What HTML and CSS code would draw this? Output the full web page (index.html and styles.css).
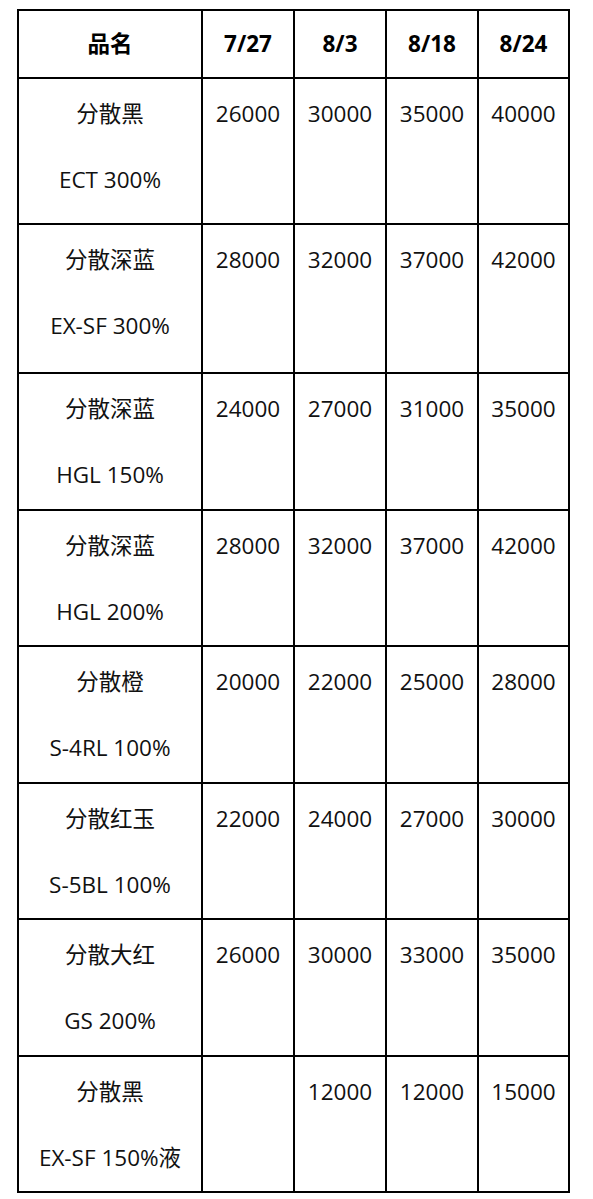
FILE: index.html
```html
<!DOCTYPE html>
<html lang="zh-CN">
<head>
<meta charset="utf-8">
<title>分散染料价格</title>
<link rel="stylesheet" href="styles.css">
</head>
<body>
<table class="price-table">
  <colgroup>
    <col class="c-name">
    <col class="c-num">
    <col class="c-num">
    <col class="c-num">
    <col class="c-num2">
  </colgroup>
  <thead>
    <tr class="head-row">
      <th>品名</th><th>7/27</th><th>8/3</th><th>8/18</th><th>8/24</th>
    </tr>
  </thead>
  <tbody>
    <tr class="row-a">
      <td><p>分散黑</p><p>ECT 300%</p></td>
      <td><p>26000</p></td><td><p>30000</p></td><td><p>35000</p></td><td><p>40000</p></td>
    </tr>
    <tr class="row-b">
      <td><p>分散深蓝</p><p>EX-SF 300%</p></td>
      <td><p>28000</p></td><td><p>32000</p></td><td><p>37000</p></td><td><p>42000</p></td>
    </tr>
    <tr>
      <td><p>分散深蓝</p><p>HGL 150%</p></td>
      <td><p>24000</p></td><td><p>27000</p></td><td><p>31000</p></td><td><p>35000</p></td>
    </tr>
    <tr>
      <td><p>分散深蓝</p><p>HGL 200%</p></td>
      <td><p>28000</p></td><td><p>32000</p></td><td><p>37000</p></td><td><p>42000</p></td>
    </tr>
    <tr>
      <td><p>分散橙</p><p>S-4RL 100%</p></td>
      <td><p>20000</p></td><td><p>22000</p></td><td><p>25000</p></td><td><p>28000</p></td>
    </tr>
    <tr>
      <td><p>分散红玉</p><p>S-5BL 100%</p></td>
      <td><p>22000</p></td><td><p>24000</p></td><td><p>27000</p></td><td><p>30000</p></td>
    </tr>
    <tr>
      <td><p>分散大红</p><p>GS 200%</p></td>
      <td><p>26000</p></td><td><p>30000</p></td><td><p>33000</p></td><td><p>35000</p></td>
    </tr>
    <tr>
      <td><p>分散黑</p><p>EX-SF 150%液</p></td>
      <td></td><td><p>12000</p></td><td><p>12000</p></td><td><p>15000</p></td>
    </tr>
  </tbody>
</table>
</body>
</html>
```

FILE: styles.css
```css
html, body {
  margin: 0;
  padding: 0;
  background: #ffffff;
}

body {
  font-family: "Open Sans", "Noto Sans CJK SC", sans-serif;
  font-size: 22.5px;
  color: #111111;
}

.price-table {
  border-collapse: collapse;
  table-layout: fixed;
  width: 553px;
  margin: 9px 0 0 17px;
  border: 2px solid #000;
}

.c-name { width: 184px; }
.c-num { width: 92px; }
.c-num2 { width: 91px; }

.price-table th,
.price-table td {
  border: 2px solid #000;
  text-align: center;
  padding: 0 4px;
}

.price-table th {
  font-weight: 700;
  color: #000;
  vertical-align: middle;
  line-height: 30px;
}

.head-row {
  height: 68px;
}

.price-table td {
  vertical-align: top;
  padding-top: 20px;
  line-height: 30px;
  white-space: nowrap;
}

.price-table tbody tr {
  height: 136.5px;
}

.price-table tbody tr.row-a {
  height: 146px;
}

.price-table tbody tr.row-b {
  height: 149px;
}

.price-table p {
  margin: 0;
}

.price-table p + p {
  margin-top: 36px;
}
```
